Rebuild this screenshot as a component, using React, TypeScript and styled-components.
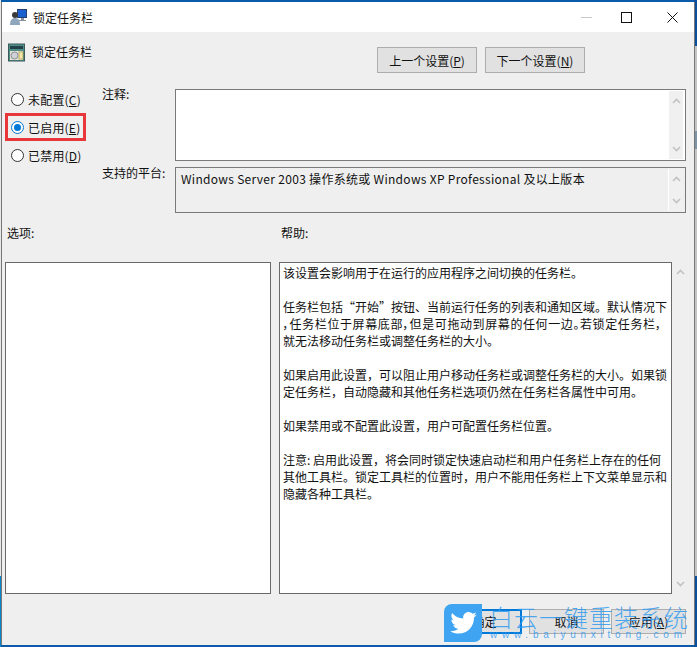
import React from "react";
import styled, { createGlobalStyle } from "styled-components";

const GlobalStyle = createGlobalStyle`
  html, body {
    margin: 0;
    padding: 0;
    width: 697px;
    height: 647px;
    overflow: hidden;
    background: #f0f0f0;
  }
  * {
    box-sizing: border-box;
  }
`;

// the desktop only shows as slivers around the dialog
const Screen = styled.div`
  width: 697px;
  height: 647px;
  padding: 2px 2px 2px 1px;
  background:
    linear-gradient(#0a4f9e 0 46px, #c4c4c4 46px 131px, #7f93a6 131px 149px, #c4c4c4 149px 576px, #0a4f9e 576px)
      right / 3px 100% no-repeat,
    linear-gradient(#e8e8e8 0 576px, #0a86c8 576px) left / 1px 100% no-repeat,
    linear-gradient(#0a5cab 0 2px, #0a5cab 645px) #0a5cab;
  font-family: "Noto Sans CJK SC", "Liberation Sans", sans-serif;
  font-size: 12px;
  color: #111;
`;

const Window = styled.div`
  height: 643px;
  display: flex;
  flex-direction: column;
  background: #efefef;
  border-left: 1px solid #777;
  border-right: 1px solid #777;
`;

const TitleBar = styled.div`
  height: 30px;
  flex: none;
  display: flex;
  align-items: center;
  background: #fff;
  padding-left: 8px;
`;

const TitleText = styled.span`
  margin-left: 5px;
  font-size: 12px;
`;

const WindowButtons = styled.div`
  margin-left: auto;
  display: flex;
  align-items: center;
  gap: 29px;
  padding-right: 16px;

  svg:last-child {
    margin-left: 6px;
  }
`;

const Header = styled.div`
  display: flex;
  height: 53px;
  flex: none;
`;

const PolicyTitle = styled.div`
  display: flex;
  align-items: flex-start;
  gap: 1px;
  padding: 11px 0 0 6px;
  width: 375px;
`;

const NavButton = styled.button`
  width: 100px;
  height: 26px;
  margin-top: 15px;
  margin-right: 8px;
  padding: 0;
  background: #e1e1e1;
  border: 1px solid #adadad;
  font: inherit;
  color: #111;
`;

const Key = styled.span`
  text-decoration: underline;
`;

const Settings = styled.div`
  display: grid;
  grid-template-columns: 100px 73px 1fr;
  height: 128px;
  flex: none;
`;

const RadioColumn = styled.div`
  display: flex;
  flex-direction: column;
`;

const RadioRow = styled.label<{ $boxed?: boolean }>`
  display: flex;
  align-items: center;
  gap: 4px;
  height: 28px;
  width: 81px;
  margin-left: 3px;
  padding-left: 6px;
  white-space: nowrap;
  letter-spacing: 0.2px;
  outline: ${(p) => (p.$boxed ? "3px solid #e8373a" : "none")};
  outline-offset: -3px;
`;

const RadioMark = styled.span<{ $on?: boolean }>`
  width: 13px;
  height: 13px;
  flex: none;
  border-radius: 50%;
  border: 1px solid ${(p) => (p.$on ? "#0078d7" : "#333")};
  background: #fff;
  display: flex;
  align-items: center;
  justify-content: center;

  &::after {
    content: "";
    display: ${(p) => (p.$on ? "block" : "none")};
    width: 7px;
    height: 7px;
    border-radius: 50%;
    background: #0078d7;
  }
`;

const FieldLabels = styled.div`
  display: flex;
  flex-direction: column;
  gap: 63px;
  padding-top: 1px;
  line-height: 16px;
`;

const Fields = styled.div`
  display: flex;
  flex-direction: column;
  gap: 6px;
  padding: 4px 8px 0 0;
`;

const Field = styled.div<{ $height: number; $grey?: boolean }>`
  height: ${(p) => p.$height}px;
  display: flex;
  justify-content: space-between;
  border: 1px solid #7a7a7a;
  background: ${(p) => (p.$grey ? "#efefef" : "#fff")};
`;

const FieldText = styled.div`
  padding: 2px 5px;
  font-size: 12px;
  letter-spacing: 0.3px;
`;

const ScrollTrack = styled.div`
  width: 15px;
  margin: 1px 2px 1px 0;
  flex: none;
  display: flex;
  flex-direction: column;
  justify-content: space-between;
  align-items: center;
  padding: 7px 0;
  background: #f0f0f0;
  border-left: 1px solid #fff;
`;

const Captions = styled.div`
  display: grid;
  grid-template-columns: 274px 1fr;
  height: 49px;
  flex: none;
  padding: 11px 0 0 5px;
`;

const Panels = styled.div`
  display: grid;
  grid-template-columns: 266px 393px 17px;
  column-gap: 8px;
  padding-left: 3px;
  height: 332px;
  flex: none;
`;

const Panel = styled.div`
  border: 1px solid #6a6a6a;
  background: #fff;
`;

const HelpBody = styled(Panel)`
  padding: 1px 3px;
`;

const HelpPara = styled.div`
  margin-bottom: 17px;
`;

const HelpLine = styled.div<{ $tight?: boolean }>`
  line-height: 17px;
  white-space: nowrap;
  font-feature-settings: ${(p) => (p.$tight ? '"palt"' : "normal")};
  letter-spacing: ${(p) => (p.$tight ? "0.6px" : "normal")};
`;

const HelpScroll = styled(ScrollTrack)`
  width: 17px;
  margin: 0 0 0 -8px;
  border-left: none;
  background: transparent;
`;

const Footer = styled.div`
  position: relative;
  flex: 1;
  display: flex;
  justify-content: flex-end;
  gap: 7px;
  padding: 15px 8px 0 0;
`;

const FooterButton = styled.button<{ $primary?: boolean }>`
  width: 75px;
  height: 25px;
  padding: 0;
  font: inherit;
  color: #111;
  background: #e1e1e1;
  border: ${(p) => (p.$primary ? "2px solid #0078d7" : "1px solid #adadad")};
`;

// watermark sits over the footer buttons
const Watermark = styled.div`
  position: absolute;
  left: 442px;
  top: 10px;
  display: flex;
  gap: 5px;
  color: rgba(47, 155, 240, 0.85);
`;

const WatermarkBadge = styled.div`
  width: 38px;
  height: 38px;
  background: #3fa5f2;
  border-radius: 8px 0 8px 0;
  display: flex;
  align-items: center;
  justify-content: center;
`;

const WatermarkText = styled.div`
  display: flex;
  flex-direction: column;
  width: 206px;
`;

const WatermarkName = styled.div`
  font-size: 24px;
  line-height: 26px;
  letter-spacing: 1px;
  padding-left: 2px;
  font-weight: 300;
  white-space: nowrap;
`;

const WatermarkUrl = styled.div`
  font-family: "Liberation Sans", sans-serif;
  font-size: 10px;
  line-height: 10px;
  letter-spacing: 4.75px;
  white-space: nowrap;
  padding-left: 3px;
`;

const Chevron = ({ up }: { up?: boolean }) => (
  <svg width="9" height="6" viewBox="0 0 9 6">
    <path
      d={up ? "M1 5 L4.5 1.5 L8 5" : "M1 1 L4.5 4.5 L8 1"}
      fill="none"
      stroke="#c2c2c2"
      strokeWidth="1.6"
    />
  </svg>
);

const Scrollbar = () => (
  <ScrollTrack>
    <Chevron up />
    <Chevron />
  </ScrollTrack>
);

const AppIcon = () => (
  <svg width="18" height="18" viewBox="0 0 18 18">
    <rect x="7" y="1" width="10" height="9" fill="#23406e" />
    <rect x="8" y="2" width="8" height="7" fill="#1c5fd0" />
    <rect x="11" y="10" width="3" height="2" fill="#8a8f99" />
    <rect x="9" y="12" width="7" height="1" fill="#8a8f99" />
    <circle cx="5" cy="7" r="3" fill="#3a3a3a" />
    <path d="M0 17 C0 12 2 10 5 10 C8 10 10 12 10 17 Z" fill="#8fa6bd" />
  </svg>
);

const PolicyIcon = () => (
  <svg width="18" height="20" viewBox="0 0 18 20">
    <rect x="0.5" y="1" width="16" height="17" fill="#4d8f86" stroke="#3d5a5a" />
    <rect x="2" y="3" width="13" height="3" fill="#23404a" />
    <rect x="2" y="8" width="13" height="9" fill="#e6e2cf" />
    <circle cx="6.5" cy="12.5" r="3.5" fill="#cfd3d8" stroke="#8a8f99" />
    <rect x="11" y="9" width="4" height="7" fill="#f2e6a8" stroke="#a08b3c" strokeWidth="0.6" />
  </svg>
);

const WindowGlyph = ({ kind }: { kind: "min" | "max" | "close" }) => (
  <svg width="11" height="11" viewBox="0 0 11 11">
    {kind === "min" && <path d="M0 5.5 H11" stroke="#c8c8c8" />}
    {kind === "max" && <rect x="0.5" y="0.5" width="10" height="10" fill="none" stroke="#111" />}
    {kind === "close" && <path d="M0.5 0.5 L10.5 10.5 M10.5 0.5 L0.5 10.5" stroke="#111" />}
  </svg>
);

const BirdIcon = () => (
  <svg width="27" height="22" viewBox="0 0 24 20">
    <path
      fill="#fff"
      d="M24 2.4c-.9.4-1.8.7-2.8.8 1-.6 1.8-1.6 2.2-2.7-1 .6-2 1-3.1 1.2C19.3.7 18 0 16.6 0c-2.7 0-4.9 2.2-4.9 4.9 0 .4 0 .8.1 1.1C7.7 5.8 4.1 3.9 1.7.9c-.4.7-.7 1.6-.7 2.5 0 1.7.9 3.2 2.2 4.1-.8 0-1.6-.2-2.2-.6v.1c0 2.4 1.7 4.4 3.9 4.8-.7.2-1.5.2-2.2.1.6 2 2.4 3.4 4.6 3.4C5.8 16.5 3.1 17.5 0 17.4 2.2 18.8 4.8 19.6 7.5 19.6c9 0 14-7.5 14-14v-.6c1-.7 1.8-1.6 2.5-2.6z"
    />
  </svg>
);

// line breaks are the dialog's own, it lets a comma start a line
const helpParagraphs = [
  ["该设置会影响用于在运行的应用程序之间切换的任务栏。"],
  [
    "任务栏包括“开始”按钮、当前运行任务的列表和通知区域。默认情况下",
    "，任务栏位于屏幕底部，但是可拖动到屏幕的任何一边。若锁定任务栏，",
    "就无法移动任务栏或调整任务栏的大小。",
  ],
  [
    "如果启用此设置，可以阻止用户移动任务栏或调整任务栏的大小。如果锁",
    "定任务栏，自动隐藏和其他任务栏选项仍然在任务栏各属性中可用。",
  ],
  ["如果禁用或不配置此设置，用户可配置任务栏位置。"],
  [
    "注意: 启用此设置，将会同时锁定快速启动栏和用户任务栏上存在的任何",
    "其他工具栏。锁定工具栏的位置时，用户不能用任务栏上下文菜单显示和",
    "隐藏各种工具栏。",
  ],
];

export default function App() {
  return (
    <Screen>
      <GlobalStyle />
      <Window>
        <TitleBar>
          <AppIcon />
          <TitleText>锁定任务栏</TitleText>
          <WindowButtons>
            <WindowGlyph kind="min" />
            <WindowGlyph kind="max" />
            <WindowGlyph kind="close" />
          </WindowButtons>
        </TitleBar>

        <Header>
          <PolicyTitle>
            <PolicyIcon />
            <TitleText>锁定任务栏</TitleText>
          </PolicyTitle>
          <NavButton>
            上一个设置(<Key>P</Key>)
          </NavButton>
          <NavButton>
            下一个设置(<Key>N</Key>)
          </NavButton>
        </Header>

        <Settings>
          <RadioColumn>
            <RadioRow>
              <RadioMark />
              <span>
                未配置(<Key>C</Key>)
              </span>
            </RadioRow>
            <RadioRow $boxed>
              <RadioMark $on />
              <span>
                已启用(<Key>E</Key>)
              </span>
            </RadioRow>
            <RadioRow>
              <RadioMark />
              <span>
                已禁用(<Key>D</Key>)
              </span>
            </RadioRow>
          </RadioColumn>
          <FieldLabels>
            <span>注释:</span>
            <span>支持的平台:</span>
          </FieldLabels>
          <Fields>
            <Field $height={72}>
              <span />
              <Scrollbar />
            </Field>
            <Field $height={46} $grey>
              <FieldText>Windows Server 2003 操作系统或 Windows XP Professional 及以上版本</FieldText>
              <Scrollbar />
            </Field>
          </Fields>
        </Settings>

        <Captions>
          <span>选项:</span>
          <span>帮助:</span>
        </Captions>

        <Panels>
          <Panel />
          <HelpBody>
            {helpParagraphs.map((lines) => (
              <HelpPara key={lines[0]}>
                {lines.map((line) => (
                  <HelpLine key={line} $tight={line.startsWith("，")}>
                    {line}
                  </HelpLine>
                ))}
              </HelpPara>
            ))}
          </HelpBody>
          <HelpScroll>
            <Chevron up />
            <Chevron />
          </HelpScroll>
        </Panels>

        <Footer>
          <FooterButton $primary>确定</FooterButton>
          <FooterButton>取消</FooterButton>
          <FooterButton>
            应用(<Key>A</Key>)
          </FooterButton>
          <Watermark>
            <WatermarkBadge>
              <BirdIcon />
            </WatermarkBadge>
            <WatermarkText>
              <WatermarkName>白云一键重装系统</WatermarkName>
              <WatermarkUrl>www.baiyunxitong.com</WatermarkUrl>
            </WatermarkText>
          </Watermark>
        </Footer>
      </Window>
    </Screen>
  );
}
